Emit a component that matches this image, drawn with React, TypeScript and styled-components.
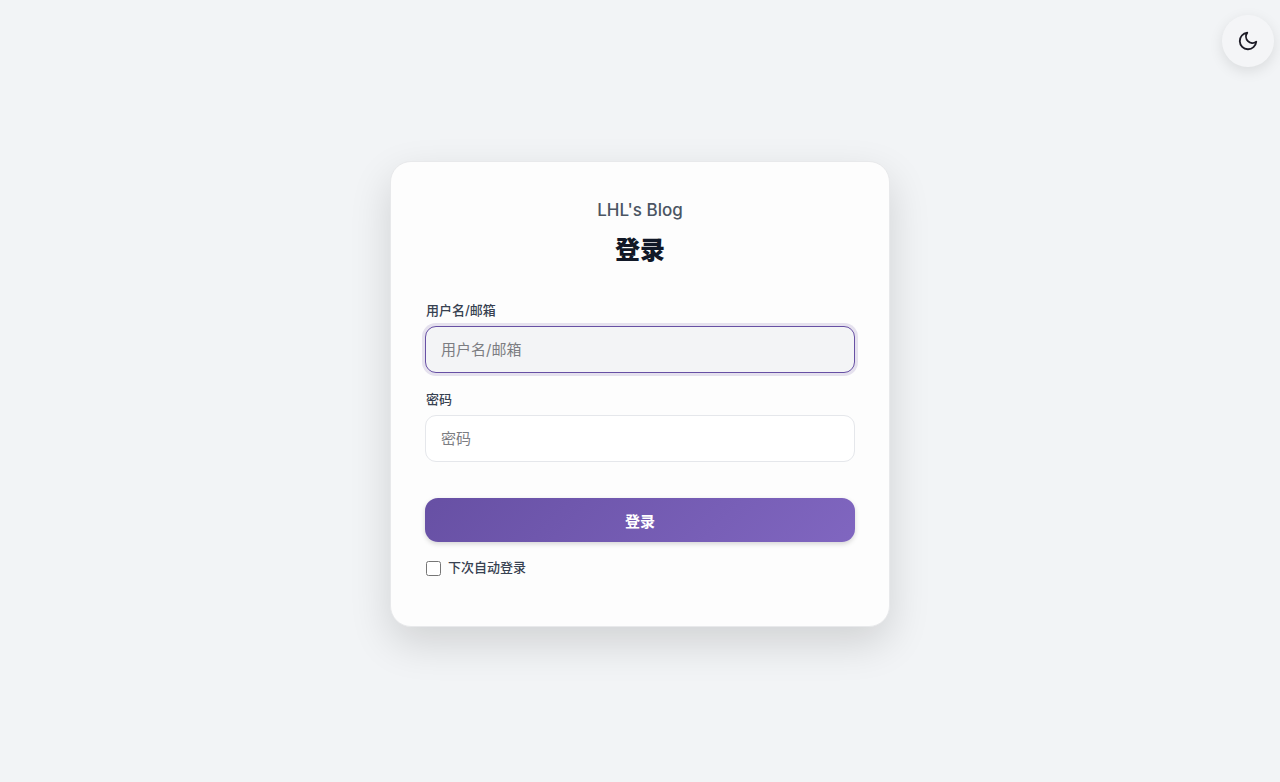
import React from "react";
import styled, { createGlobalStyle, css } from "styled-components";

const GlobalStyle = createGlobalStyle`
  * { box-sizing: border-box; }
  body {
    margin: 0;
    background: #f2f4f6;
    color: #111827;
    font-family: Inter, "Noto Sans CJK SC", sans-serif;
    -webkit-font-smoothing: antialiased;
  }
  button, input { font: inherit; }
`;

const Page = styled.main`
  min-height: 100vh;
  display: flex;
  align-items: center;
  justify-content: center;
  padding: 22px 16px 16px;
`;

const ThemeToggle = styled.button`
  position: fixed;
  top: 15px;
  right: 6px;
  width: 52px;
  height: 52px;
  display: flex;
  align-items: center;
  justify-content: center;
  padding: 0;
  border: 0;
  border-radius: 50%;
  background: #f4f5f7;
  color: #1c1b26;
  box-shadow: 0 4px 14px rgba(0, 0, 0, 0.1);
  cursor: pointer;
`;

const Card = styled.section`
  width: 100%;
  max-width: 500px;
  padding: 34px;
  border: 1px solid #e8e9eb;
  border-radius: 21px;
  background: #fdfdfd;
  box-shadow: 0 16px 42px rgba(0, 0, 0, 0.14);
`;

const Header = styled.header`
  display: flex;
  flex-direction: column;
  align-items: center;
  gap: 8px;
  margin-bottom: 32px;
  text-align: center;
`;

const SiteName = styled.a`
  color: #4b5563;
  font-size: 17px;
  font-weight: 500;
  line-height: 28px;
  text-decoration: none;
`;

const Title = styled.h1`
  margin: 0;
  color: #111827;
  font-size: 25px;
  font-weight: 900;
  line-height: 36px;
`;

const Form = styled.form`
  display: flex;
  flex-direction: column;
`;

const Field = styled.div`
  display: flex;
  flex-direction: column;
  gap: 6px;
  margin-bottom: 16px;
`;

const Label = styled.label`
  padding-left: 1px;
  color: #374151;
  font-size: 13px;
  font-weight: 500;
  line-height: 20px;
`;

const TextInput = styled.input<{ $active?: boolean }>`
  width: 100%;
  height: 47px;
  padding: 0 15px;
  border: 1px solid #e5e7eb;
  border-radius: 11px;
  outline: 0;
  background: #ffffff;
  color: #111827;
  font-size: 15px;

  &::placeholder { color: #7c7d82; opacity: 1; }

  ${({ $active }) =>
    $active &&
    css`
      border-color: #6750a4;
      background: #f3f4f6;
      box-shadow: 0 0 0 3px rgba(103, 80, 164, 0.16);
    `}
`;

const SubmitButton = styled.button`
  width: 100%;
  height: 44px;
  margin-top: 20px;
  border: 0;
  border-radius: 13px;
  background: linear-gradient(135deg, #6750a4, #8066c0);
  color: #ffffff;
  font-size: 15px;
  font-weight: 600;
  box-shadow: 0 2px 5px rgba(0, 0, 0, 0.16);
  cursor: pointer;
`;

const RememberRow = styled.div`
  display: flex;
  align-items: center;
  gap: 7px;
  margin: 15px 0;
  padding-left: 1px;
`;

const Checkbox = styled.input`
  width: 15px;
  height: 15px;
  margin: 2px 0 0;
`;

const RememberLabel = styled(Label)`
  padding-left: 0;
`;

export default function App() {
  return (
    <>
      <GlobalStyle />
      <ThemeToggle type="button" aria-label="切换主题">
        <svg
          width="22"
          height="22"
          viewBox="0 0 24 24"
          fill="none"
          stroke="currentColor"
          strokeWidth="2"
          strokeLinecap="round"
          strokeLinejoin="round"
          aria-hidden="true"
        >
          <path d="M21 12.79A9 9 0 1 1 11.21 3 7 7 0 0 0 21 12.79z" />
        </svg>
      </ThemeToggle>
      <Page>
        <Card>
          <Header>
            <SiteName href="#">LHL's Blog</SiteName>
            <Title>登录</Title>
          </Header>
          <Form onSubmit={(event) => event.preventDefault()}>
            <Field>
              <Label htmlFor="username">用户名/邮箱</Label>
              <TextInput id="username" type="text" placeholder="用户名/邮箱" $active />
            </Field>
            <Field>
              <Label htmlFor="password">密码</Label>
              <TextInput id="password" type="password" placeholder="密码" />
            </Field>
            <SubmitButton type="submit">登录</SubmitButton>
            <RememberRow>
              <Checkbox id="remember" type="checkbox" />
              <RememberLabel htmlFor="remember">下次自动登录</RememberLabel>
            </RememberRow>
          </Form>
        </Card>
      </Page>
    </>
  );
}
